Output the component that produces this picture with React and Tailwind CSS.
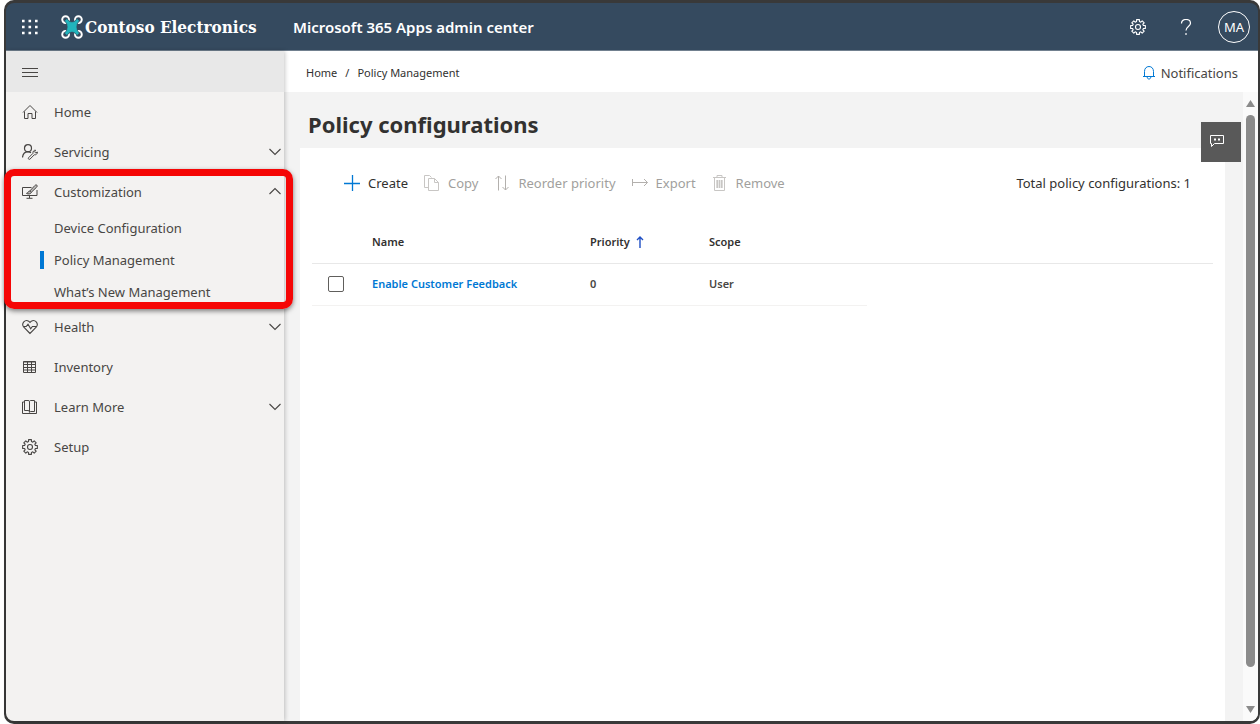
import React from "react";

function Icon({ size = "size-4", box = "0 0 16 16", className = "", children }) {
  return (
    <svg
      viewBox={box}
      fill="none"
      stroke="currentColor"
      strokeWidth="1"
      aria-hidden="true"
      className={`${size} shrink-0 ${className}`}
    >
      {children}
    </svg>
  );
}

// Eight-toothed cog outline: each tooth is an outer pair of points between two inner ones.
const GEAR =
  Array.from({ length: 8 }, (_, k) =>
    [
      [-15, 5.6],
      [-11, 7.5],
      [11, 7.5],
      [15, 5.6],
    ].map(([offset, radius]) => {
      const a = ((k * 45 + offset) * Math.PI) / 180;
      return `${(8 + radius * Math.cos(a)).toFixed(2)} ${(8 + radius * Math.sin(a)).toFixed(2)}`;
    })
  )
    .flat()
    .map((p, i) => (i ? "L" : "M") + p)
    .join("") + "z";

function Gear({ className }) {
  return (
    <Icon className={className}>
      <path d={GEAR} strokeLinejoin="round" strokeWidth="1.1" />
      <circle cx="8" cy="8" r="2.5" strokeWidth="1.1" />
    </Icon>
  );
}

function Chevron({ up }) {
  return (
    <Icon size="w-3 h-4" box="0 0 12 16">
      <path d={up ? "M.5 10 6 4.5l5.500 5.500" : "M.5 5 6 10.500 11.500 5"} strokeWidth="1.100" />
    </Icon>
  );
}

const icons = {
  home: (
    <Icon>
      <path d="M1 8.500 8 1.500l7 7M2.500 7.500v7h3.500V9.500h4v5h3.500v-7" />
    </Icon>
  ),
  servicing: (
    <Icon>
      <circle cx="6" cy="4.200" r="3.500" strokeWidth="1.200" />
      <path d="M.5 13.500C.8 10 3 7.800 6 7.800c1.300 0 2.200.3 3 .9" strokeWidth="1.200" />
      <path d="M6.500 13.800 11 9.300c-.4-1.600.8-3.300 2.600-3.100l-1 1.600 1 1.100 1.800-.9c.2 1.800-1.500 3.200-3.100 2.800l-4.400 4.400c-1 .6-2-.4-1.400-1.400z" />
    </Icon>
  ),
  customization: (
    <Icon>
      <path d="M9.500 3.500H.5v8h14.500V6M7.500 11.500V14M4.500 14.300h6" />
      <path
        d="M14.900 1.200c-.7-.6-1.500-.2-2 .3L7.800 7l1.400 1.400 5.400-5.200c.6-.6.8-1.400.3-2zM7.800 7C6 7 6.400 9 4.500 9.400c1.500 1 4.500.7 4.700-1"
        fill="currentColor"
        fillOpacity="0.3"
      />
    </Icon>
  ),
  health: (
    <Icon>
      <path d="M8 14.500 1.600 8C-1 4.700 3-.2 6.700 2.200L8 3.400l1.300-1.200C13-.2 17 4.700 14.400 8z" strokeWidth="1.100" />
      <path d="M1.500 7.500h2.700l1.800-2.300 2.700 4.600 1.700-2.300h4" strokeWidth="1.100" />
    </Icon>
  ),
  inventory: (
    <Icon>
      <path d="M1.500 2.500h12v11h-12zM1.500 5.500h12M1.500 8.500h12M1.500 11h12M5.500 2.500v11M9.500 2.500v11M1.500 3h12" />
    </Icon>
  ),
  learn: (
    <Icon>
      <path d="M2.500 1.500H6c.9 0 1.500.3 1.500 1v10.300c0-.8-.6-1.300-1.500-1.300H2.500zM7.500 2.500c0-.7.600-1 1.500-1h3.500v11H9c-.9 0-1.500.5-1.500 1.300M2.500 3h-2v11.500h14V3h-2" />
    </Icon>
  ),
  setup: <Gear />,
};

function NavItem({ icon, label, expand, up }) {
  const body = (
    <>
      <span className="flex w-8 items-center">{icons[icon]}</span>
      <span className="flex-1">{label}</span>
      {expand && <Chevron up={up} />}
    </>
  );
  const cls = "flex h-10 w-full items-center pl-4 pr-[3px] text-left";
  return expand ? (
    <button type="button" aria-expanded={!!up} className={cls}>
      {body}
    </button>
  ) : (
    <a href="#" className={cls}>
      {body}
    </a>
  );
}

function SubItem({ label, active }) {
  return (
    <li>
      <a href="#" aria-current={active ? "page" : undefined} className="flex h-8 items-center pl-[34px]">
        <span className={active ? "mr-[10px] h-[18px] w-1 bg-[#0078d4]" : "mr-[10px] h-[18px] w-1"} />
        {label}
      </a>
    </li>
  );
}

function Logo() {
  return (
    <svg viewBox="0 0 22 24" className="h-6 w-[22px] shrink-0" aria-hidden="true">
      <g fill="none" stroke="#fff" strokeWidth="1.900">
        <circle cx="4.600" cy="4.600" r="3.400" />
        <circle cx="17.400" cy="4.600" r="3.400" />
        <circle cx="4.600" cy="19.400" r="3.400" />
        <circle cx="17.400" cy="19.400" r="3.400" />
      </g>
      <path
        fill="none"
        stroke="#354a5f"
        strokeWidth="1.500"
        d="M4.200 5.800 5.800 4.200Q11 11 16.200 4.200l1.600 1.600Q12.500 12 17.800 18.200l-1.600 1.600Q11 13 5.800 19.800l-1.600-1.600Q9.500 12 4.200 5.800z"
      />
      <path
        fill="#21b5bd"
        stroke="#21b5bd"
        strokeWidth="0.500"
        strokeLinejoin="round"
        d="M4.200 5.800 5.800 4.200Q11 11 16.200 4.200l1.600 1.600Q12.500 12 17.800 18.200l-1.600 1.600Q11 13 5.800 19.800l-1.600-1.600Q9.500 12 4.200 5.800z"
      />
    </svg>
  );
}

function Command({ icon, label, disabled }) {
  return (
    <button
      type="button"
      disabled={disabled}
      className={
        disabled
          ? "flex items-center gap-2 text-[#a19f9d]"
          : "flex items-center gap-2 text-[#323130]"
      }
    >
      {icon}
      {label}
    </button>
  );
}

export default function App() {
  return (
    <div className="min-h-screen bg-white pl-1 font-['Noto_Sans',sans-serif] text-[13px] leading-5 text-[#484644]">
      <div className="flex min-h-screen flex-col rounded-[10px] border-x-2 border-y-[3px] border-[#393939] bg-[#393939]">
        <header className="flex h-12 items-center rounded-t-lg border-b border-[#71808f] bg-[#354a5f] pl-4 pr-2 text-white">
          <button type="button" aria-label="App launcher" className="mr-[23px]">
            <Icon>
              <path d="M0 2h16M0 8h16M0 14h16" strokeWidth="2.600" strokeDasharray="2.600 3.900" />
            </Icon>
          </button>
          <a href="#" className="flex flex-none basis-[232px] items-center gap-0.5">
            <Logo />
            <span className="whitespace-nowrap font-['DejaVu_Serif_Condensed','DejaVu_Serif',serif] text-[17px] font-bold">
              Contoso Electronics
            </span>
          </a>
          <span className="flex-1 text-[15px] font-semibold">Microsoft 365 Apps admin center</span>
          <button type="button" aria-label="Settings" className="mr-8">
            <Gear />
          </button>
          <button type="button" aria-label="Help" className="mr-6">
            <Icon>
              <path d="M3.500 4.500C3.500 2 5.500.5 8 .5s4.500 1.500 4.500 3.800c0 3-4.500 3.600-4.500 7.200M8 14v2" strokeWidth="1.200" />
            </Icon>
          </button>
          <button
            type="button"
            aria-label="Account"
            className="flex size-8 items-center justify-center rounded-full border border-white"
          >
            MA
          </button>
        </header>

        <div className="flex flex-1">
          <nav
            aria-label="Main"
            className="relative z-10 w-[278px] shrink-0 rounded-bl-lg bg-[#f3f2f1] shadow-[1px_0_4px_rgba(0,0,0,0.22)]"
          >
            <div className="flex h-[41px] items-center bg-[#e8e8e8] pl-4">
              <button type="button" aria-label="Toggle navigation">
                <Icon>
                  <path d="M0 4.500h16M0 8.500h16M0 12.500h16" />
                </Icon>
              </button>
            </div>
            <NavItem icon="home" label="Home" />
            <NavItem icon="servicing" label="Servicing" expand />
            <div className="relative -mb-px">
              <NavItem icon="customization" label="Customization" expand up />
              <ul>
                <SubItem label="Device Configuration" />
                <SubItem label="Policy Management" active />
                <SubItem label="What’s New Management" />
              </ul>
              <div className="pointer-events-none absolute -bottom-px -left-0.5 -right-[9px] -top-[3px] rounded-[10px] border-[7px] border-[#f50606] shadow-[0_2px_5px_rgba(0,0,0,0.5)]" />
            </div>
            <NavItem icon="health" label="Health" expand />
            <NavItem icon="inventory" label="Inventory" />
            <NavItem icon="learn" label="Learn More" expand />
            <NavItem icon="setup" label="Setup" />
          </nav>

          <div className="flex min-w-0 flex-1 flex-col rounded-br-lg bg-white">
            <div className="flex h-[41px] items-center justify-between pl-[22px] pr-5 pt-0.5">
              <nav aria-label="Breadcrumb" className="flex gap-2 text-[11px] text-[#323130]">
                <a href="#">Home</a>
                <span>/</span>
                <a href="#">Policy Management</a>
              </nav>
              <button type="button" className="flex items-center gap-1">
                <Icon className="text-[#0078d4]">
                  <path d="M3.500 11.500V6.500C3.500 3.500 5.300 1.500 8 1.500s4.500 2 4.500 5v5M2 11.500h12M6.200 12c0 2.700 3.600 2.700 3.600 0" />
                </Icon>
                Notifications
              </button>
            </div>

            <div className="flex flex-1">
              <main className="relative flex min-w-0 flex-1 flex-col bg-[#f3f3f3] pl-4 pr-[18px]">
                <h1 className="flex h-14 items-center pl-2 pt-2 text-[22px] font-bold text-[#323130]">
                  Policy configurations
                </h1>
                <button
                  type="button"
                  aria-label="Feedback"
                  className="absolute right-0.5 top-[30px] flex h-10 w-10 items-center bg-[#595959] pb-1 pl-2 text-white"
                >
                  <Icon>
                    <path d="M1.500 3.500h13v8h-9l-3 3v-3h-1z" />
                    <path d="M5 7.500h2M9 7.500h2" strokeWidth="2" />
                  </Icon>
                </button>
                <section className="flex-1 bg-white px-3">
                  <div className="flex h-[69px] items-center justify-between pl-8 pr-[22px]">
                    <div className="flex gap-4">
                      <Command
                        label="Create"
                        icon={
                          <Icon className="text-[#0078d4]">
                            <path d="M0 8.500h16M8.500 0v16" strokeWidth="1.300" />
                          </Icon>
                        }
                      />
                      <Command
                        disabled
                        label="Copy"
                        icon={
                          <Icon className="text-[#c8c6c4]">
                            <path d="M4.500 12.500h-4V.5h5l2 2M4.500 3.500h6l4 4v8h-10zM10.500 3.500v4h4" />
                          </Icon>
                        }
                      />
                      <Command
                        disabled
                        label="Reorder priority"
                        icon={
                          <Icon className="text-[#b3b0ad]">
                            <path d="M4.500 15.500V1M1.500 4 4.500 1l3 3M11.500.5V15M8.500 12l3 3 3-3" />
                          </Icon>
                        }
                      />
                      <Command
                        disabled
                        label="Export"
                        icon={
                          <Icon className="text-[#b3b0ad]">
                            <path d="M.5 4v7M1 7.500h14.500M12 4l3.500 3.500L12 11" />
                          </Icon>
                        }
                      />
                      <Command
                        disabled
                        label="Remove"
                        icon={
                          <Icon className="text-[#c8c6c4]">
                            <path d="M1 2.500h13M5 2.500v-2h5v2M2.500 2.500v13h10v-13" />
                            <path d="M5.200 5v8M7.500 5v8M9.800 5v8" strokeWidth="1.700" />
                          </Icon>
                        }
                      />
                    </div>
                    <span className="text-[#323130]">Total policy configurations: 1</span>
                  </div>

                  <table className="w-full table-fixed border-collapse text-left text-[11px]">
                    <colgroup>
                      <col className="w-[60px]" />
                      <col className="w-[218px]" />
                      <col className="w-[119px]" />
                      <col className="w-[158px]" />
                      <col />
                    </colgroup>
                    <thead>
                      <tr className="h-[46px] border-b border-[#e8e8e8] text-[#323130]">
                        <td />
                        <th className="pt-1 font-semibold">Name</th>
                        <th className="pt-1 font-semibold" aria-sort="ascending">
                          <span className="flex items-center gap-1">
                            Priority
                            <Icon size="w-3 h-4" box="0 0 12 16" className="text-[#1f4fc4]">
                              <path d="M6 14V3M3 6l3-3 3 3" strokeWidth="1.400" />
                            </Icon>
                          </span>
                        </th>
                        <th className="pt-1 font-semibold">Scope</th>
                        <td />
                      </tr>
                    </thead>
                    <tbody>
                      <tr className="h-[42px] font-semibold">
                        <td className="border-b border-[#f3f2f1] pl-4">
                          <input
                            type="checkbox"
                            aria-label="Select Enable Customer Feedback"
                            className="block size-4 appearance-none rounded-xs border border-[#605e5c] bg-white"
                          />
                        </td>
                        <td className="border-b border-[#f3f2f1]">
                          <a href="#" className="text-[#0078d4]">
                            Enable Customer Feedback
                          </a>
                        </td>
                        <td className="border-b border-[#f3f2f1]">0</td>
                        <td className="border-b border-[#f3f2f1]">User</td>
                        <td />
                      </tr>
                    </tbody>
                  </table>
                </section>
              </main>

              <div
                aria-hidden="true"
                className="flex w-[15px] flex-col items-center gap-1 rounded-br-lg bg-[#fafafa] pb-2 pt-2 text-[#8b8b8b]"
              >
                <svg viewBox="0 0 9 7" className="h-[7px] w-[9px]">
                  <path d="M4.500 0 9 7H0z" fill="currentColor" />
                </svg>
                <div className="mt-1 w-[9px] flex-[18] rounded-full bg-[#8b8b8b]" />
                <div className="flex-1" />
                <svg viewBox="0 0 9 7" className="h-[7px] w-[9px]">
                  <path d="M0 0h9L4.500 7z" fill="currentColor" />
                </svg>
              </div>
            </div>
          </div>
        </div>
      </div>
    </div>
  );
}
